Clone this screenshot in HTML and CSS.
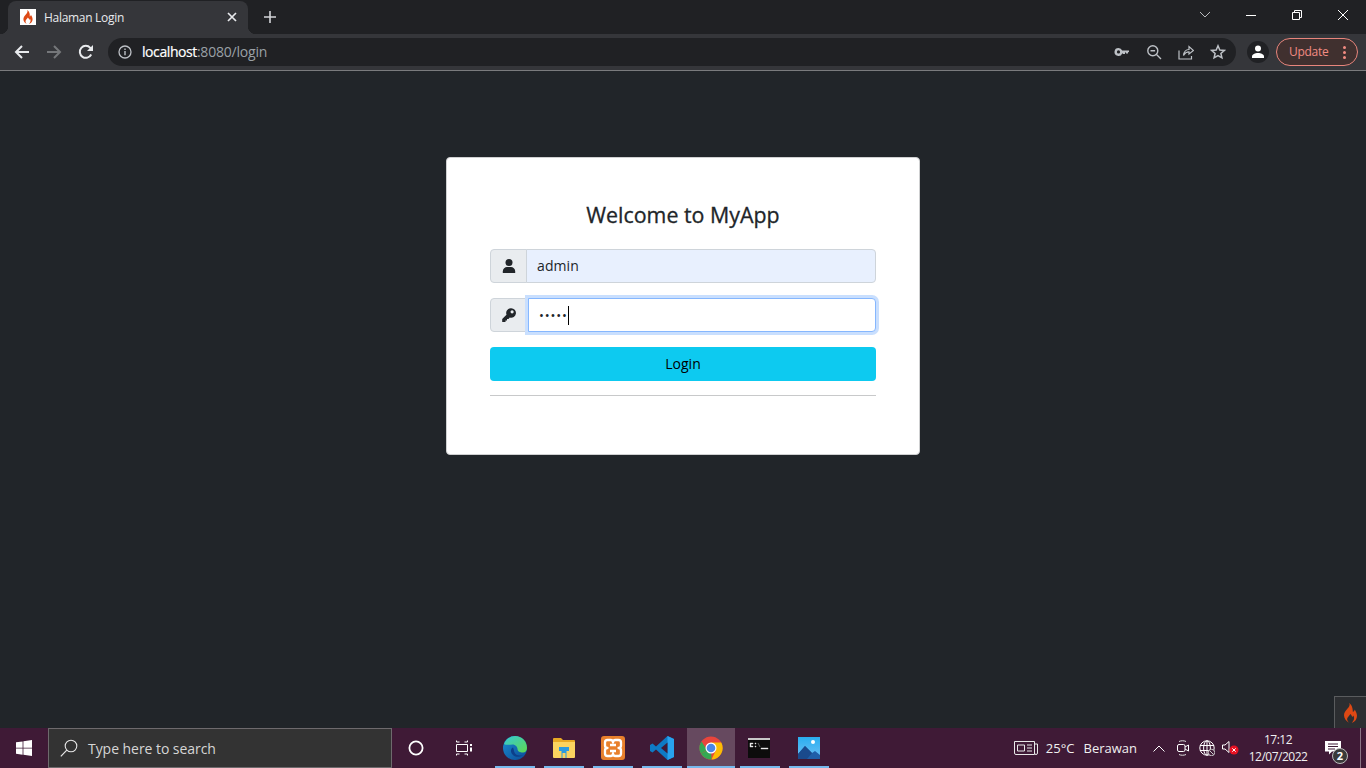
FILE: index.html
```html
<!DOCTYPE html>
<html lang="id">
<head>
<meta charset="utf-8">
<title>Halaman Login</title>
<link rel="stylesheet" href="styles.css">
</head>
<body>
<div class="screen">
  <header class="browser">
    <div class="tabstrip">
      <div class="tab">
        <span class="favicon">
          <svg viewBox="0 0 16 16" width="16" height="16"><path fill="#dd4814" d="M7.200 1c1 2-.4 3.300-1.600 4.700C4.500 7 3.400 8.300 3.400 10.300c0 2.300 1.600 4 3.800 4.700-1.200-.9-1.900-2-1.600-3.100.3-1.200 1.400-1.900 2.300-3.400.9 1 1.200 1.600 1.300 2.300.4-.2.700-.6.800-1.100.6 1 .7 2 .4 2.900-.2.800-.8 1.400-1.500 2.400 2.300-.7 3.700-2.400 3.700-4.700 0-1.900-1-3.300-1.700-4.500-.1.900-.5 1.500-1.200 1.800C10.100 5 9.500 2.500 7.200 1z"/></svg>
        </span>
        <span class="tab-title">Halaman Login</span>
        <svg class="tab-close" viewBox="0 0 10 10" width="10" height="10"><path d="M1 1l8 8M9 1l-8 8" stroke="#e8eaed" stroke-width="1.700"/></svg>
      </div>
      <svg class="new-tab" viewBox="0 0 12 12" width="12" height="12"><path d="M6 0v12M0 6h12" stroke="#d2d4d7" stroke-width="1.600"/></svg>
      <div class="window-controls">
        <span class="win-cell win-chevron"><svg viewBox="0 0 12 7" width="12" height="7"><path d="M1 1l5 5 5-5" fill="none" stroke="#b8babd" stroke-width="1"/></svg></span>
        <span class="win-cell"><svg viewBox="0 0 10 10" width="10" height="10"><path d="M0 5.500h10" stroke="#fff" stroke-width="1"/></svg></span>
        <span class="win-cell"><svg viewBox="0 0 10 10" width="10" height="10"><path d="M.5 2.500h7v7h-7zM2.500 2.500V.5h7v7h-2" fill="none" stroke="#fff" stroke-width="1"/></svg></span>
        <span class="win-cell"><svg viewBox="0 0 10 10" width="10" height="10"><path d="M0 0l10 10M10 0L0 10" stroke="#fff" stroke-width="1"/></svg></span>
      </div>
    </div>
    <div class="toolbar">
      <span class="nav-btn"><svg viewBox="0 0 16 16" width="16" height="16"><path d="M15 8H2M8 2L2 8l6 6" fill="none" stroke="#e8eaed" stroke-width="2"/></svg></span>
      <span class="nav-btn"><svg viewBox="0 0 16 16" width="16" height="16"><path d="M1 8h13M8 2l6 6-6 6" fill="none" stroke="#75777a" stroke-width="2"/></svg></span>
      <span class="nav-btn"><svg viewBox="0 0 16 16" width="16" height="16"><path d="M13.200 10.500A6 6 0 1 1 12.300 3.800L14 5.500" fill="none" stroke="#e8eaed" stroke-width="2"/><path d="M15 1v6H9z" fill="#e8eaed"/></svg></span>
      <div class="omnibox">
        <svg class="omni-info" viewBox="0 0 14 14" width="14" height="14"><circle cx="7" cy="7" r="6" fill="none" stroke="#bdc1c6" stroke-width="1.300"/><path d="M7 6v4.200M7 3.500v1.400" stroke="#bdc1c6" stroke-width="1.400"/></svg>
        <span class="url"><span class="url-host">localhost</span>:8080/login</span>
        <span class="omni-icons">
          <svg viewBox="0 0 16 16" width="16" height="16"><path fill="#bdc1c6" d="M4.500 4a4 4 0 0 1 3.700 2.500H15V8l-1 .2v1.300h-2V8.500h-1v1.500H9V9.500h-.8A4 4 0 1 1 4.500 4zm0 2.300a1.500 1.500 0 1 0 0 3.200 1.500 1.500 0 0 0 0-3.200z"/></svg>
          <svg viewBox="0 0 16 16" width="16" height="16"><circle cx="6.800" cy="6.800" r="5" fill="none" stroke="#bdc1c6" stroke-width="1.400"/><path d="M10.500 10.500L15 15M4.500 6.800h4.600" stroke="#bdc1c6" stroke-width="1.400"/></svg>
          <svg viewBox="0 0 16 16" width="16" height="16"><path d="M1 6.500V15h12.500v-3M5.500 11.500C6 7.500 8.500 5.500 11 5.500V2.500L15.500 6.500 11 10V7.800C8.500 7.800 6.800 9 5.500 11.500z" fill="none" stroke="#bdc1c6" stroke-width="1.200"/></svg>
          <svg viewBox="0 0 16 16" width="16" height="16"><path d="M8 1.800l1.800 4.200 4.500.4-3.400 3 1 4.400L8 11.500l-3.900 2.300 1-4.400-3.400-3 4.500-.4z" fill="none" stroke="#bdc1c6" stroke-width="1.500"/></svg>
        </span>
      </div>
      <span class="avatar"><svg viewBox="0 0 14 14" width="14" height="14"><circle cx="7" cy="3.600" r="3" fill="#fff"/><path d="M1 13v-1.500C1 9.300 4 8 7 8s6 1.300 6 3.500V13z" fill="#fff"/></svg></span>
      <div class="update">
        <span class="update-label">Update</span>
        <span class="update-dots"><i></i><i></i><i></i></span>
      </div>
    </div>
  </header>

  <main class="page">
    <section class="card">
      <h1 class="card-title">Welcome to MyApp</h1>
      <div class="group">
        <span class="addon"><svg viewBox="0 0 14 14" width="14" height="14"><circle cx="7" cy="3.500" r="3.500" fill="#212529"/><path d="M.8 14v-1.600C.8 9.800 3 8 5 8h4c2 0 4.200 1.800 4.200 4.400V14z" fill="#212529"/></svg></span>
        <div class="field field-filled">admin</div>
      </div>
      <div class="group">
        <span class="addon"><svg viewBox="0 0 14 14" width="14" height="14"><path fill="#212529" fill-rule="evenodd" d="M9 .2a4.800 4.800 0 1 1-1.200 9.400L6.500 10.900H5V12.400H3.500V14H.2v-3L4.500 6.700A4.800 4.800 0 0 1 9 .2zm1.100 2a1.600 1.600 0 1 0 0 3.200 1.600 1.600 0 0 0 0-3.200z"/></svg></span>
        <div class="field field-focus"><span class="dots">•••••</span><span class="caret"></span></div>
      </div>
      <button class="login" type="button"><span class="login-label">Login</span></button>
      <hr class="rule">
    </section>
    <div class="ci-badge">
      <svg viewBox="0 0 16 20" width="16" height="20"><path fill="#dd4814" d="M7.200 0c1.200 2.600-.5 4.200-2 6C3.800 7.700 2 9.500 2 12.300c0 3.200 2.300 6 5.500 7.700-1.700-1.300-2.700-2.800-2.300-4.400.4-1.700 2-2.700 3.200-4.700 1.200 1.400 1.700 2.300 1.800 3.200.6-.3 1-.9 1.100-1.500.8 1.400 1 2.800.6 4-.3 1.100-1.100 2-2.100 3.400 3.300-1 5.200-4 5.200-7.200 0-2.700-1.400-4.600-2.400-6.300-.1 1.300-.7 2.100-1.700 2.500C10.600 5.800 10.400 2.300 7.200 0z"/></svg>
    </div>
  </main>

  <footer class="taskbar">
    <span class="start"><svg viewBox="0 0 16 16" width="16" height="16"><path fill="#fff" d="M0 2.300l6.600-.9v6.300H0zM7.400 1.300L16 0v7.700H7.400zM0 8.400h6.600v6.300L0 13.800zM7.400 8.400H16V16l-8.600-1.200z"/></svg></span>
    <div class="search">
      <svg viewBox="0 0 18 18" width="18" height="18"><circle cx="11" cy="7" r="5.800" fill="none" stroke="#e6e6e6" stroke-width="1.100"/><path d="M6.800 11.200L.8 17.300" stroke="#e6e6e6" stroke-width="1.200"/></svg>
      <span class="search-text">Type here to search</span>
    </div>
    <span class="tb-cell"><svg viewBox="0 0 16 16" width="16" height="16"><circle cx="8" cy="8" r="6.600" fill="none" stroke="#fff" stroke-width="1.800"/></svg></span>
    <span class="tb-cell tb-cell-last"><svg viewBox="0 0 17 16" width="17" height="16"><path d="M.5 4.500h11v7H.5zM.5 2h3M8.500 2h3M.5 14h3M8.500 14h3M.5.5v1.500M11.500.5v1.500M.5 14v1.500M11.500 14v1.500" fill="none" stroke="#fff" stroke-width="1"/><path d="M14 4h2v2h-2zM14 7.500h2v4h-2z" fill="#fff"/></svg></span>
    <span class="app">
      <svg viewBox="0 0 24 24" width="24" height="24"><defs><linearGradient id="eg" x1="0" y1="0" x2="1" y2="1"><stop offset="0" stop-color="#36c9d6"/><stop offset="1" stop-color="#5fd84f"/></linearGradient><linearGradient id="eb" x1="0" y1="0" x2="1" y2="1"><stop offset="0" stop-color="#1b8ed0"/><stop offset="1" stop-color="#0b4a96"/></linearGradient></defs><circle cx="12" cy="12" r="12" fill="url(#eb)"/><path d="M1 8C3 2.500 8 0 12 0c7 0 12 5 12 12 0 2.500-1.500 4.500-4 4.500-3 0-5.500-1-5.500-3.500 0-2-2-4.500-5-4.500-3.500 0-6 1-8.500-.5z" fill="url(#eg)"/><path d="M10 11.500c-2.500 1-3 5 .5 8 2.500 2 7 1.500 9.500-.5-4 1.500-7.500 0-8.500-2.500-.7-1.800-.5-3.500-1.500-5z" fill="#0d3f8a"/></svg>
      <i class="app-line"></i>
    </span>
    <span class="app">
      <svg viewBox="0 0 22 20" width="22" height="20"><path d="M0 1a1 1 0 0 1 1-1h7l2 2h11a1 1 0 0 1 1 1v3H0z" fill="#e8a924"/><path d="M0 4h22v15a1 1 0 0 1-1 1H1a1 1 0 0 1-1-1z" fill="#fbd35f"/><path d="M6 9h10v4h-2.500v7h-5v-7H6z" fill="#2b9be0"/><path d="M9.500 15h3v5h-3z" fill="#fbd35f"/></svg>
      <i class="app-line"></i>
    </span>
    <span class="app">
      <svg viewBox="0 0 24 24" width="24" height="24"><rect width="24" height="24" rx="3" fill="#e8802c"/><path d="M4 6.500a2.500 2.500 0 0 1 2.500-2.500h3a2.500 2.500 0 0 1 2.500 2.500 2.500 2.500 0 0 1 2.500-2.500h3a2.500 2.500 0 0 1 2.500 2.500v3a2.500 2.500 0 0 1-2.500 2.500 2.500 2.500 0 0 1 2.500 2.500v3a2.500 2.500 0 0 1-2.500 2.500h-3a2.500 2.500 0 0 1-2.500-2.500 2.500 2.500 0 0 1-2.500 2.500h-3A2.500 2.500 0 0 1 4 17.500v-3A2.500 2.500 0 0 1 6.500 12 2.500 2.500 0 0 1 4 9.500zM9 9h6M9 15h6" fill="none" stroke="#fff" stroke-width="2.300" stroke-linejoin="round"/></svg>
      <i class="app-line"></i>
    </span>
    <span class="app">
      <svg viewBox="0 0 24 24" width="24" height="24"><path d="M17.500 0L24 3v18l-6.500 3L6 13.500l-3.500 3L0 15V9l2.500-1.500 3.500 3z" fill="#0e7ac4"/><path d="M17.500 0L24 3v18l-6.500 3z" fill="#28a2ee"/><path d="M17.500 6.500L11 12l6.500 5.500z" fill="#3f1a36"/></svg>
      <i class="app-line"></i>
    </span>
    <span class="app app-active">
      <svg viewBox="0 0 24 24" width="24" height="24"><circle cx="12" cy="12" r="11.500" fill="#e8453c"/><path d="M12 12L2 17.800A11.500 11.500 0 0 0 12.500 23.500z" fill="#34a853"/><path d="M2 17.800A11.500 11.500 0 0 1 2.500 5.500L8 14z" fill="#34a853"/><path d="M12 6.500h10.300A11.500 11.500 0 0 1 12.500 23.500L17 14z" fill="#fbbc05"/><circle cx="12" cy="12" r="5.500" fill="#fff"/><circle cx="12" cy="12" r="4.300" fill="#4a86e8"/></svg>
      <i class="app-line"></i>
    </span>
    <span class="app app-cmd">
      <svg viewBox="0 0 22 20" width="22" height="20"><rect width="22" height="20" fill="#0c0c0c"/><rect width="22" height="2" fill="#c8c8c8"/><path d="M2 5h3v1H3v2h2v1H2zM7 5h1v1H7zM7 8h1v1H7zM10 5l2 4M13 10h7v1h-7z" fill="#e8e8e8" stroke="#e8e8e8" stroke-width=".4"/></svg>
      <i class="app-line"></i>
    </span>
    <span class="app">
      <svg viewBox="0 0 22 22" width="22" height="22"><defs><linearGradient id="ps" x1="0" y1="0" x2="0" y2="1"><stop offset="0" stop-color="#2aaef0"/><stop offset="1" stop-color="#6ec0f5"/></linearGradient></defs><rect width="22" height="22" fill="url(#ps)"/><circle cx="15" cy="5" r="2" fill="#fff"/><path d="M0 22V17L7 9l7 7 3-2 5 4v4z" fill="#1f5ea8"/><path d="M7 9l7 7-5 6H0v-5z" fill="#1a4a8c"/></svg>
      <i class="app-line"></i>
    </span>
    <div class="tray">
      <svg class="tray-news" viewBox="0 0 24 16" width="24" height="16"><path d="M.5 1.500h20v13H2a1.500 1.500 0 0 1-1.500-1.500zM20.500 4h3v9a1.500 1.500 0 0 1-3 0M3.500 5h7v6h-7zM13 5h5M13 8h5M13 11h5" fill="none" stroke="#e8e8e8" stroke-width="1"/></svg>
      <span class="tray-temp">25°C</span>
      <span class="tray-weather">Berawan</span>
      <svg class="tray-up" viewBox="0 0 12 7" width="12" height="7"><path d="M.5 6.500L6 1l5.500 5.500" fill="none" stroke="#fff" stroke-width="1"/></svg>
      <svg class="tray-meet" viewBox="0 0 12 16" width="12" height="16"><path d="M2 1.500c2-1 5-1 7 0M2 14.500c2 1 5 1 7 0" fill="none" stroke="#ddd" stroke-width="1"/><rect x=".5" y="4.500" width="7.500" height="7" rx="1.500" fill="none" stroke="#fff"/><path d="M8 7l3.500-2v6L8 9" fill="none" stroke="#fff"/></svg>
      <svg class="tray-globe" viewBox="0 0 16 16" width="16" height="16"><circle cx="8" cy="8" r="7.200" fill="none" stroke="#fff"/><ellipse cx="8" cy="8" rx="3.400" ry="7.200" fill="none" stroke="#fff"/><path d="M1 5.500h14M1 10.500h14M8 1v14" stroke="#fff"/><circle cx="12.500" cy="12.500" r="3.200" fill="#3f1a36" stroke="#ccc"/><path d="M10.500 10.500l4 4" stroke="#ccc"/></svg>
      <svg class="tray-sound" viewBox="0 0 18 16" width="18" height="16"><path d="M.5 5h2.500L7 1.500v11L3 9H.5z" fill="none" stroke="#fff"/><circle cx="12" cy="10" r="4.500" fill="#e81123"/><path d="M10.300 8.300l3.400 3.400M13.700 8.300l-3.400 3.400" stroke="#fff"/></svg>
      <div class="clock"><span>17:12</span><span>12/07/2022</span></div>
      <span class="notify">
        <svg viewBox="0 0 16 14" width="16" height="14"><path d="M0 0h16v10.500H7l-3 3v-3H0z" fill="#fff"/><path d="M3 3h10M3 5.500h10M3 8h7" stroke="#3f1a36"/></svg>
        <b class="notify-badge">2</b>
      </span>
    </div>
  </footer>
</div>
</body>
</html>
```

FILE: styles.css
```css
* { box-sizing: border-box; }
html, body { margin: 0; height: 100%; overflow: hidden; }
body { font-family: "Open Sans", "Noto Sans", sans-serif; color: #212529; }
svg { display: block; flex: none; }
.screen { width: 1366px; height: 768px; display: flex; flex-direction: column; }

/* browser chrome */
.browser { height: 71px; flex: none; border-bottom: 1px solid #7a7b7d; background: #35363a; }
.tabstrip { height: 34px; background: #202124; display: flex; align-items: center; position: relative; padding-left: 8px; }
.tab { width: 240px; height: 33px; margin-top: 1px; background: #35363a; border-radius: 8px 8px 0 0; display: flex; align-items: center; padding: 0 11px 1px 12px; position: relative; }
.tab::before, .tab::after { content: ""; position: absolute; bottom: 0; width: 8px; height: 8px; }
.tab::before { left: -8px; background: radial-gradient(circle at 0 0, transparent 8px, #35363a 8.500px); }
.tab::after { right: -8px; background: radial-gradient(circle at 100% 0, transparent 8px, #35363a 8.500px); }
.favicon { width: 16px; height: 16px; background: #fff; flex: none; }
.tab-title { margin-left: 8px; font-size: 12px; color: #e8eaed; flex: 1; white-space: nowrap; letter-spacing: -.3px; }
.new-tab { margin-left: 16px; }
.window-controls { margin-left: auto; display: flex; align-self: flex-start; }
.win-cell { width: 46px; height: 29px; display: flex; align-items: center; justify-content: center; }
.toolbar { height: 36px; display: flex; align-items: center; padding: 0 8px 0 6px; }
.nav-btn { width: 32px; height: 28px; display: flex; align-items: center; justify-content: center; }
.omnibox { width: 1128px; height: 28px; margin-left: 6px; background: #202124; border-radius: 14px; display: flex; align-items: center; padding: 0 10px 0 10px; }
.url { margin-left: 10px; padding-bottom: 1px; font-size: 14px; color: #9aa0a6; letter-spacing: -.2px; white-space: nowrap; }
.url-host { color: #fff; letter-spacing: -.42px; -webkit-text-stroke: .2px #fff; }
.omni-icons { margin-left: auto; display: flex; gap: 16px; }
.avatar { width: 22px; height: 22px; border-radius: 50%; background: #202124; margin-left: 11px; display: flex; align-items: center; justify-content: center; }
.update { width: 82px; height: 28px; margin-left: 7px; border: 1px solid #e8857c; border-radius: 14px; background: #40302f; display: flex; align-items: center; padding-left: 12px; }
.update-label { font-size: 12px; padding-bottom: 1px; color: #f28b82; letter-spacing: -.3px; }
.update-dots { margin-left: auto; margin-right: 11px; display: flex; flex-direction: column; gap: 2px; }
.update-dots i { width: 3px; height: 3px; border-radius: 50%; background: #f28b82; display: block; }

/* page */
.page { flex: 1; background: #212529; padding-top: 86px; position: relative; }
.card { width: 474px; height: 298px; margin: 0 auto; background: #fff; border: 1px solid #cfd0d1; border-radius: 4px; padding: 41px 43px 0; display: flex; flex-direction: column; }
.card-title { margin: 0 0 17px; font-size: 21.400px; line-height: 32px; padding-bottom: 1px; font-weight: 400; -webkit-text-stroke: .3px #212529; text-align: center; color: #212529; }
.group { display: flex; height: 34px; margin-bottom: 15px; }
.addon { width: 37px; flex: none; background: #e9ecef; border: 1px solid #ced4da; border-radius: 4px 0 0 4px; display: flex; align-items: center; justify-content: center; }
.field { flex: 1; display: flex; align-items: center; font-size: 14px; color: #212529; border: 1px solid #ced4da; }
.field-filled { margin-left: -1px; padding-left: 10px; padding-bottom: 1px; background: #e8f0fe; border-radius: 0 4px 4px 0; letter-spacing: .1px; }
.field-focus { margin-left: 1px; padding-left: 10px; background: #fff; border-color: #86b7fe; border-radius: 0 4px 4px 0; box-shadow: 0 0 0 3px #c9dffe; position: relative; }
.dots { font-size: 13px; letter-spacing: .85px; color: #212529; }
.caret { width: 1px; height: 19px; background: #000; margin-left: 0; }
.login { height: 34px; flex: none; border: 0; padding: 0 0 2px; border-radius: 4px; background: #0dcaf0; color: #000; font: inherit; font-size: 14px; }
.login-label { display: block; line-height: 19px; }
.rule { margin: 14px 0 0; width: 100%; border: 0; border-top: 1px solid #c8c9ca; }
.ci-badge { position: absolute; right: 0; bottom: 0; width: 32px; height: 32px; background: #2c2e31; border: 1px solid #5a5c5e; border-right: 0; border-bottom: 0; padding-right: 2px; display: flex; align-items: center; justify-content: center; }

/* taskbar */
.taskbar { height: 40px; flex: none; background: #3f1a36; display: flex; align-items: stretch; color: #fff; }
.start { width: 48px; display: flex; align-items: center; justify-content: center; }
.search { width: 344px; background: #333; border: 1px solid #6e6a6d; display: flex; align-items: center; padding-left: 11px; }
.search-text { margin-left: 10px; font-size: 14px; color: #d6d6d6; white-space: nowrap; letter-spacing: -.05px; }
.tb-cell { width: 48px; display: flex; align-items: center; justify-content: center; }
.tb-cell-last { margin-right: 3px; }
.app { width: 49px; padding-right: 2px; display: flex; align-items: center; justify-content: center; position: relative; }
.app-active { background: #66495f; width: 48px; margin-right: 1px; padding-right: 0; }
.app-cmd { padding-right: 4px; }
.app-line { position: absolute; left: 4px; right: 5px; bottom: 0; height: 2px; background: #76b9ed; display: block; }
.app-active .app-line { left: 0; right: 0; }
.tray { margin-left: auto; display: flex; align-items: center; font-size: 13px; color: #f0f0f0; }
.tray-temp { margin-left: 8px; }
.tray-weather { margin-left: 9px; }
.tray-up { margin-left: 16px; }
.tray-meet { margin-left: 12px; }
.tray-globe { margin-left: 10px; }
.tray-sound { margin-left: 7px; }
.clock { width: 58px; margin-left: 9px; display: flex; flex-direction: column; align-items: center; font-size: 12px; line-height: 17px; white-space: nowrap; letter-spacing: -.5px; }
.notify { width: 41px; margin-left: 13px; margin-right: 5px; height: 40px; border-right: 1px solid #8a7484; display: flex; align-items: center; padding-left: 5px; position: relative; }
.notify-badge { position: absolute; left: 12px; top: 20px; width: 16px; height: 16px; border-radius: 50%; background: #3a3a3a; border: 1px solid #bbb; font-size: 11px; line-height: 14px; text-align: center; color: #fff; }
```
